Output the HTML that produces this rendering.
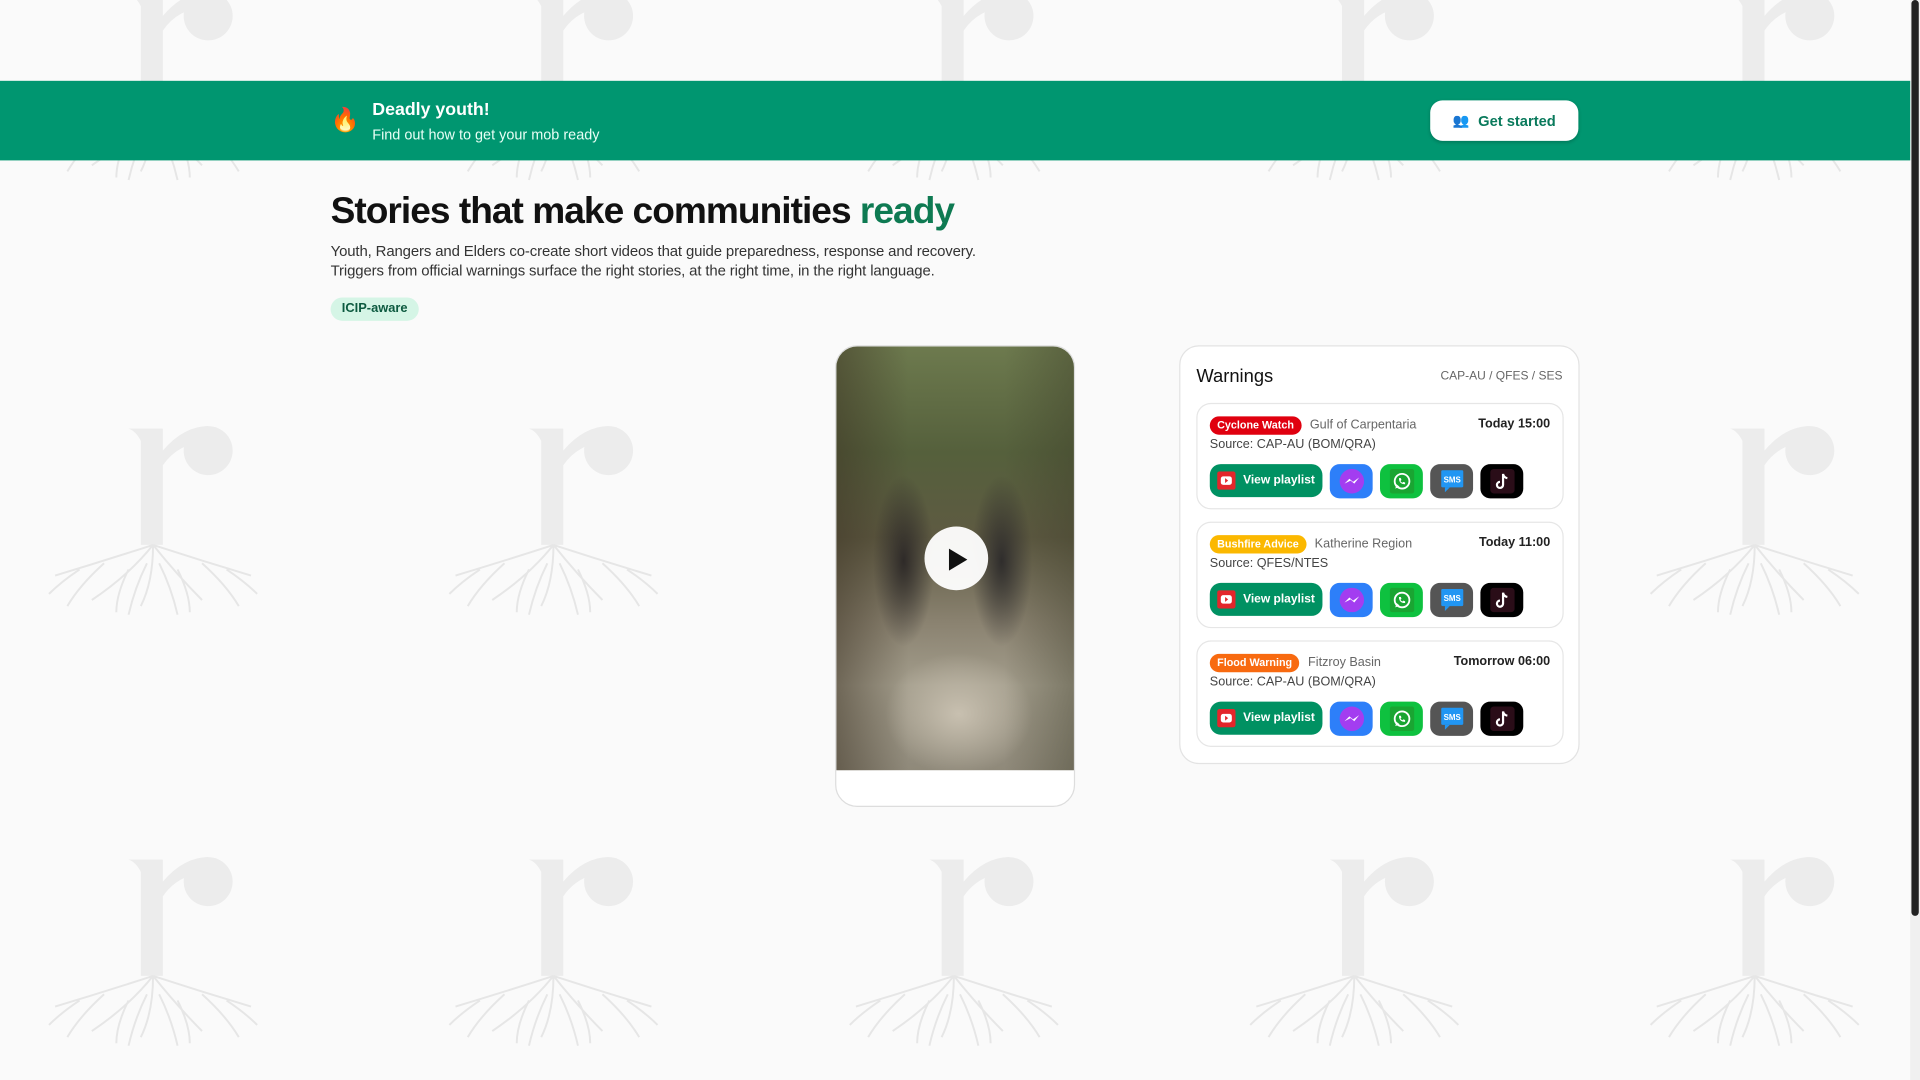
<!DOCTYPE html>
<html><head><meta charset="utf-8"><style>
*{box-sizing:border-box;margin:0;padding:0}
html,body{width:1920px;height:1080px;overflow:hidden;background:#fafafa;font-family:"Liberation Sans",sans-serif}
#s{position:absolute;left:0;top:0;width:1568px;height:882px;transform:scale(1.22449);transform-origin:0 0;background:#fafafa}
.abs{position:absolute}
.banner{left:0;top:66px;width:1560px;height:65px;background:#009670}
.btn{left:1168px;top:82px;width:121px;height:33px;background:#fff;border-radius:10px;color:#0a7a5c;font-weight:bold;font-size:12px;display:flex;align-items:center;justify-content:center;gap:7px;box-shadow:0 1px 3px rgba(0,0,0,.2)}
h1{position:absolute;left:270px;top:156px;font-size:30.3px;letter-spacing:-.8px;color:#111;font-weight:bold}
.p{left:270px;font-size:12.2px;color:#333;letter-spacing:-.1px}
.chip{left:270px;top:243px;width:72px;height:19px;border-radius:10px;background:#d5f5e6;color:#0d5a40;font-size:10.5px;font-weight:bold;text-align:center;line-height:19px}
.phone{left:682px;top:282px;width:196px;height:377px;border:1px solid #ddd;border-radius:18px;background:#fff;overflow:hidden}
.vid{position:absolute;left:0;top:0;width:196px;height:346px;background:
radial-gradient(ellipse 25px 70px at 55px 175px,#2e2a28,transparent),
radial-gradient(ellipse 25px 70px at 135px 175px,#2f2d2c,transparent),
radial-gradient(ellipse 60px 50px at 100px 300px,#c8c0b0,transparent),
linear-gradient(90deg,rgba(60,50,35,.5),transparent 30%,transparent 70%,rgba(60,60,40,.4)),
linear-gradient(180deg,#6d7a4e 0%,#55603c 25%,#5e5a42 45%,#8a8270 65%,#a39d8c 80%,#8f897a 100%)}
.play{position:absolute;left:72px;top:147px;width:52px;height:52px;border-radius:50%;background:#fff;opacity:.95}
.card{left:963px;top:282px;width:327px;height:342px;border:1px solid #e3e3e3;border-radius:16px;background:#fff}
.w{position:absolute;left:13px;width:300px;height:87px;border:1px solid #e6e6e6;border-radius:12px;background:#fff}
.hd{position:absolute;left:10px;top:10px;display:flex;align-items:center;gap:7px}
.tag{height:15px;border-radius:8px;color:#fff;font-size:8.8px;font-weight:bold;line-height:15px;padding:0 6px}
.reg{font-size:10.3px;color:#666}
.time{position:absolute;right:10px;top:11px;font-size:10.3px;color:#222;font-weight:bold}
.src{position:absolute;left:10px;top:28px;font-size:10.3px;color:#444}
.row{position:absolute;left:10px;top:49px;display:flex;gap:6px}
.vp{width:92px;height:27px;border-radius:9px;background:#009162;color:#fff;font-size:9.8px;font-weight:bold;display:flex;align-items:center;justify-content:center;gap:6px}
.ic{width:35px;height:28px;border-radius:8px;display:flex;align-items:center;justify-content:center}
</style></head><body><div id="s">
<svg class="abs" style="left:0;top:0" width="1560" height="882">
<defs><g id="r">
<path d="M-20 0 L8 0 L8 18 Q25 -2 45 -2 L45 10 Q20 12 8 30 L8 95 L-10 95 L-10 10 Q-14 2 -20 0Z" fill="#ececec"/>
<circle cx="45" cy="18" r="20" fill="#ececec"/>
<g stroke="#e6e6e6" stroke-width="1.6" fill="none">
<path d="M0 95 Q-40 108 -80 120 M0 95 Q-20 120 -50 140 M0 95 Q0 125 -10 145 M0 95 Q20 120 40 140 M0 95 Q40 108 80 120 M-40 110 Q-60 128 -70 145 M40 110 Q60 128 70 145 M-20 115 Q-30 135 -30 150 M20 115 Q30 135 30 150 M-60 115 Q-75 125 -85 135 M60 115 Q75 125 85 135 M-5 110 Q-15 130 -20 152 M5 110 Q15 130 20 152"/>
</g></g></defs>
<g transform="translate(125,-5)"><use href="#r" x="0"/><use href="#r" x="327"/><use href="#r" x="654"/><use href="#r" x="981"/><use href="#r" x="1308"/></g>
<g transform="translate(125,350)"><use href="#r" x="0"/><use href="#r" x="327"/><use href="#r" x="654"/><use href="#r" x="981"/><use href="#r" x="1308"/></g>
<g transform="translate(125,702)"><use href="#r" x="0"/><use href="#r" x="327"/><use href="#r" x="654"/><use href="#r" x="981"/><use href="#r" x="1308"/></g>
</svg>
<div class="abs" style="left:1560px;top:0;width:8px;height:882px;background:#f0f0f0"></div>
<div class="abs" style="left:1561px;top:0;width:6px;height:748px;background:#222;border-radius:3px"></div>
<div class="abs banner"></div>
<div class="abs" style="left:270px;top:86px;font-size:19px">🔥</div>
<div class="abs" style="left:304px;top:82px;color:#fff;font-weight:bold;font-size:14.5px">Deadly youth!</div>
<div class="abs" style="left:304px;top:103px;color:#e8fff6;font-size:11.8px">Find out how to get your mob ready</div>
<div class="abs btn"><span style="font-size:11px">👥</span>Get started</div>
<h1>Stories that make communities <span style="color:#0e7a52">ready</span></h1>
<div class="abs p" style="top:198px">Youth, Rangers and Elders co-create short videos that guide preparedness, response and recovery.</div>
<div class="abs p" style="top:214px">Triggers from official warnings surface the right stories, at the right time, in the right language.</div>
<div class="abs chip">ICIP-aware</div>
<div class="abs phone"><div class="vid"><div class="play"></div><svg style="position:absolute;left:90px;top:164px" width="20" height="20"><path d="M2 1 L17 10 L2 19Z" fill="#111"/></svg></div></div>
<div class="abs card">
<div class="abs" style="left:13px;top:16px;font-size:15px;color:#111">Warnings</div>
<div class="abs" style="right:13px;top:19px;font-size:9.8px;color:#666">CAP-AU / QFES / SES</div>
<div class="w" style="top:46px"><div class="hd"><div class="tag" style="background:#e0000f">Cyclone Watch</div><div class="reg">Gulf of Carpentaria</div></div><div class="time">Today 15:00</div><div class="src">Source: CAP-AU (BOM/QRA)</div>ROW</div>
<div class="w" style="top:143px"><div class="hd"><div class="tag" style="background:#fbb800">Bushfire Advice</div><div class="reg">Katherine Region</div></div><div class="time">Today 11:00</div><div class="src">Source: QFES/NTES</div>ROW</div>
<div class="w" style="top:240px"><div class="hd"><div class="tag" style="background:#f86a10">Flood Warning</div><div class="reg">Fitzroy Basin</div></div><div class="time">Tomorrow 06:00</div><div class="src">Source: CAP-AU (BOM/QRA)</div>ROW</div>
</div>
</div>
<script>
var row='<div class="row"><div class="vp"><svg width="15" height="15"><rect width="15" height="15" rx="2" fill="#e3262b"/><rect x="3" y="4" width="9" height="7" rx="2" fill="#fff"/><path d="M6.5 5.5L9 7.5 6.5 9.5Z" fill="#e3262b"/></svg>View playlist</div>'+
'<div class="ic" style="background:#2d7ff9"><svg width="20" height="20"><circle cx="10" cy="10" r="10" fill="#a33df0"/><path d="M4 12 L8 8 L11 10.5 L16 7 L12 12 L9 9.5Z" fill="#fff"/></svg></div>'+
'<div class="ic" style="background:#0ec13f"><svg width="20" height="20"><rect width="20" height="20" rx="2" fill="#1aa532"/><circle cx="10" cy="10" r="6" fill="none" stroke="#fff" stroke-width="1.5"/><path d="M4.5 16 L5.5 12.5 L8 14.5Z" fill="#fff"/><path d="M7.5 7.5 Q7.5 12.5 12.5 12.5 L12.5 11 L11 10.5 L10.3 11.2 Q8.8 10.5 8.8 9.7 L9.5 9 L9 7.5Z" fill="#fff"/></svg></div>'+
'<div class="ic" style="background:#555"><svg width="20" height="20"><rect x="1" y="1" width="18" height="14" rx="1" fill="#2196f3"/><path d="M4 15 L4 19 L8 15Z" fill="#2196f3"/><text x="10" y="11" font-size="6.5" font-weight="bold" fill="#fff" text-anchor="middle" font-family="Liberation Sans">SMS</text></svg></div>'+
'<div class="ic" style="background:#000"><svg width="20" height="20"><rect width="20" height="20" rx="3" fill="#2a0d18"/><path d="M10.5 4 L10.5 13 A2.5 2.5 0 1 1 8 10.5 M10.5 4 Q11 7 14 7.5" fill="none" stroke="#fff" stroke-width="1.8"/></svg></div></div>';
document.querySelectorAll('.w').forEach(function(w){w.innerHTML=w.innerHTML.replace('ROW',row)});
</script>
</body></html>
